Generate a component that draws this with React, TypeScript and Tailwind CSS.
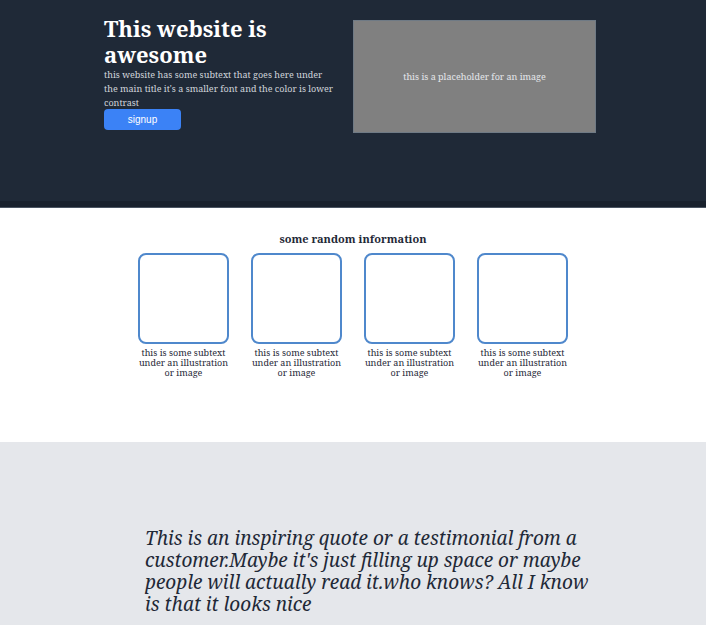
export default function App() {
  const serif = { fontFamily: '"Noto Serif", "DejaVu Serif", serif' };
  const cards = [0, 1, 2, 3];
  return (
    <div className="w-[706px] bg-white" style={serif}>
      <header className="bg-[#1f2937] h-[207px] border-b-[6px] border-[#19212d] shadow-[0_1px_0_#4b5563]">
        <div className="flex pl-[104px] pt-[15px]">
          <div className="w-[232px]">
            <h1 className="text-[22px] font-bold leading-[26px] text-white">This website is awesome</h1>
            <p className="text-[9px] leading-[14px] text-[#d1d5db] mt-[1px]">
              this website has some subtext that goes here under the main title it's a smaller font and the color is lower contrast
            </p>
            <button
              className="mt-[-1px] w-[77px] h-[21px] rounded bg-[#3b82f6] text-white text-[10px] flex items-center justify-center"
              style={{ fontFamily: '"Liberation Sans", Arial, sans-serif' }}
            >
              signup
            </button>
          </div>
          <div className="ml-[17px] mt-[5px] w-[243px] h-[113px] bg-[#808080] border border-[#6f7a85] flex items-center justify-center">
            <span className="text-[9px] text-[#e5e7eb]">this is a placeholder for an image</span>
          </div>
        </div>
      </header>
      <section className="h-[235px] pt-[25px]">
        <h2 className="text-center text-[11px] font-bold text-[#1f2937] leading-[14px]">some random information</h2>
        <div className="flex justify-center gap-[22px] mt-[7px]">
          {cards.map((i) => (
            <div key={i} className="w-[91px] flex flex-col items-center">
              <div className="w-[91px] h-[91px] border-2 border-[#4f88cc] rounded-[8px]" />
              <p className="text-center text-[9px] leading-[10px] text-[#1f2937] mt-[4px] w-[91px]">
                this is some subtext under an illustration or image
              </p>
            </div>
          ))}
        </div>
      </section>
      <section className="bg-[#e5e7eb] h-[184px] pt-[85px] pl-[145px]">
        <p className="italic text-[19px] leading-[22px] text-[#1f2937] w-[455px]">
          This is an inspiring quote or a testimonial from a customer.Maybe it's just filling up space or maybe people will actually read it.who knows? All I know is that it looks nice
        </p>
      </section>
    </div>
  );
}
